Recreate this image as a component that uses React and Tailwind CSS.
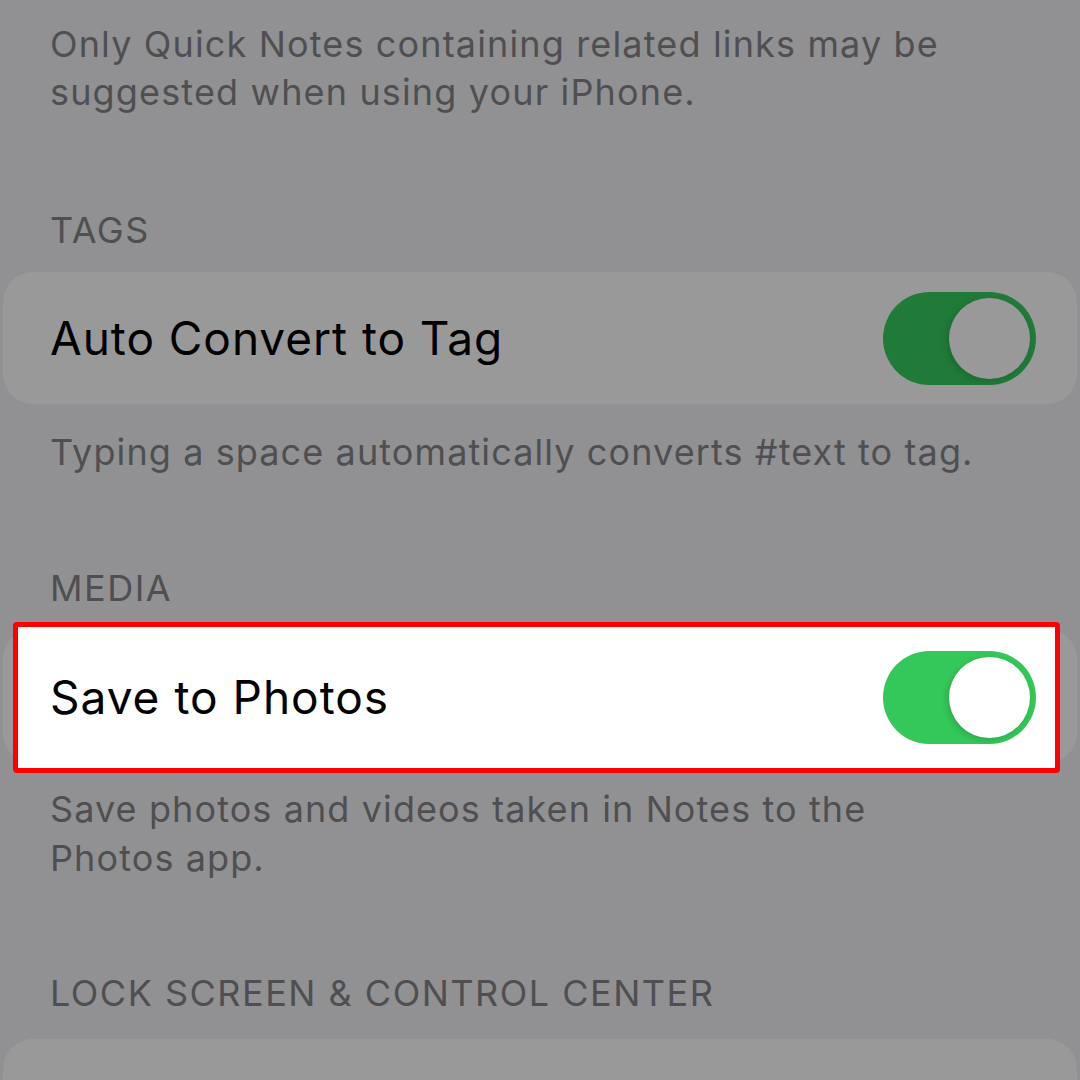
import React from 'react';

const font = { fontFamily: 'Inter, "Noto Sans", sans-serif' };

// iOS style switch, always on here
const Toggle = ({ dim = false }) => (
  <div
    className={
      'relative w-[153px] h-[93px] rounded-full shrink-0 ' +
      (dim ? 'bg-[#207a38]' : 'bg-[#34c759]')
    }
  >
    <div
      className={
        'absolute top-[6px] right-[6px] w-[81px] h-[81px] rounded-full shadow-[-2px_2px_6px_rgba(0,0,0,0.15)] ' +
        (dim ? 'bg-[#999999]' : 'bg-white')
      }
    />
  </div>
);

const Header = ({ children, className = '' }) => (
  <div className={'px-[50px] text-[36px] leading-[48px] text-[#4f4f52] tracking-[1.5px] ' + className}>
    {children}
  </div>
);

const Footer = ({ children, className = '' }) => (
  <div className={'px-[50px] text-[36px] leading-[49px] text-[#4f4f52] tracking-[1.1px] ' + className}>
    {children}
  </div>
);

export default function App() {
  return (
    <div className="w-[1080px] h-[1080px] overflow-hidden bg-[#919193]" style={font}>
      <div className="pt-[20px]">
        <Footer className="!leading-[48px] !tracking-[1.15px]">
          Only Quick Notes containing related links may be
          <br />
          suggested when using your iPhone.
        </Footer>

        <Header className="mt-[90px]">TAGS</Header>

        <div className="mt-[18px] mx-[3px] h-[132px] rounded-[30px] bg-[#999999] flex items-center justify-between pl-[47px] pr-[41px]">
          <span className="text-[46px] text-black tracking-[0.95px]">Auto Convert to Tag</span>
          <Toggle dim />
        </div>

        <Footer className="mt-[24px]">Typing a space automatically converts #text to tag.</Footer>

        <Header className="mt-[87px]">MEDIA</Header>

        <div className="relative mt-[17px] mx-[3px] h-[134px] rounded-[30px] bg-[#999999]">
          <div className="absolute -top-[7px] -bottom-[10px] left-[10px] right-[17px] border-[5px] border-[#ff0000] rounded-[4px] bg-white flex items-center justify-between pl-[32px] pr-[19px]">
            <span className="text-[46px] text-black tracking-[1px]">Save to Photos</span>
            <Toggle />
          </div>
        </div>

        <Footer className="mt-[22px]">
          Save photos and videos taken in Notes to the
          <br />
          Photos app.
        </Footer>

        <Header className="mt-[86px]">LOCK SCREEN &amp; CONTROL CENTER</Header>

        <div className="mt-[22px] mx-[3px] h-[132px] rounded-[30px] bg-[#999999]" />
      </div>
    </div>
  );
}
